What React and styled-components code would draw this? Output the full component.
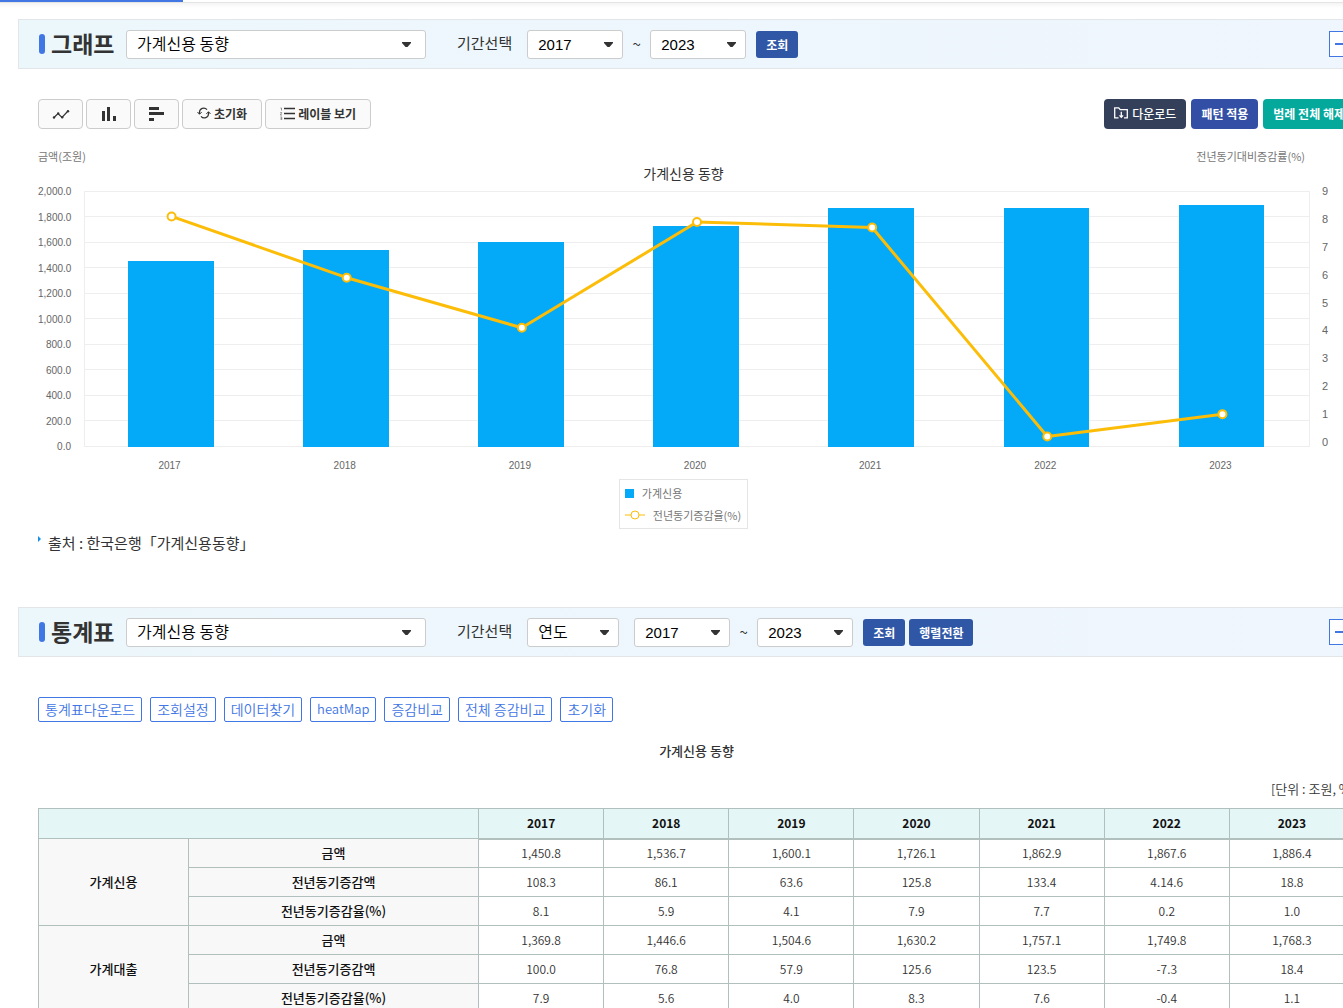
import React from "react";
import styled, { createGlobalStyle } from "styled-components";

const GlobalStyle = createGlobalStyle`
  *, *::before, *::after { box-sizing: border-box; }
  body {
    margin: 0;
    background: #fff;
    color: #333;
    font-family: "Noto Sans CJK KR", "Noto Sans", sans-serif;
  }
  button, select { font-family: inherit; margin: 0; cursor: pointer; }
`;

const Page = styled.main`
  height: 100vh;
  overflow: hidden;
`;

const TabLine = styled.div`
  height: 9px;
  background: linear-gradient(#e5e5e5 0 1px, #f4f4f4 1px, #fff 6px) 0 2px no-repeat;
`;

const ActiveTab = styled.div`
  width: 183px;
  height: 2px;
  background: #4176e5;
`;

const Content = styled.div`
  margin: 10px -32px 0 18px;
`;

const Panel = styled.header`
  display: flex;
  align-items: center;
  height: 50px;
  padding: 0 19px 0 20px;
  border: 1px solid #e3e6e8;
  background: linear-gradient(90deg, #ecf7fc, #eff6fd);
`;

const TitleBlock = styled.div`
  display: flex;
  align-items: center;
  gap: 6px;
  width: 87px;
  flex: none;

  &::before {
    content: "";
    width: 6px;
    height: 20px;
    border-radius: 3px;
    background: #4176e5;
  }
`;

const Title = styled.h2`
  margin: 0;
  padding-bottom: 2px;
  font-size: 23px;
  line-height: 30px;
  font-weight: 700;
  white-space: nowrap;
`;

const SelectBox = styled.span`
  position: relative;
  flex: none;
  width: ${(p) => p.$width}px;
  margin-right: ${(p) => p.$after || 0}px;

  select {
    appearance: none;
    display: block;
    width: 100%;
    height: 29px;
    padding: ${(p) => (p.$numeric ? "1px 10px 0" : "0 10px 2px")};
    border: 1px solid #ccc;
    border-radius: 3px;
    background: #fff;
    color: #000;
    font-size: ${(p) => (p.$numeric ? 15 : 16)}px;
    font-family: ${(p) => (p.$numeric ? '"Liberation Sans", Arial, sans-serif' : "inherit")};
    font-weight: 350;
    line-height: 20px;
  }

  svg {
    position: absolute;
    top: 12px;
    right: ${(p) => (p.$width > 200 ? 15 : 10)}px;
    pointer-events: none;
  }
`;

const PeriodLabel = styled.label`
  margin: 0 15px 0 31px;
  padding-bottom: 2px;
  font-size: 15px;
  line-height: 20px;
  white-space: nowrap;
`;

const Tilde = styled.span`
  width: 27px;
  text-align: center;
  font-size: 15px;
  line-height: 20px;
`;

const Actions = styled.div`
  display: flex;
  gap: 4px;
  margin-left: 10px;
`;

const ActionButton = styled.button`
  height: 27px;
  padding: 0 10px;
  border: 0;
  border-radius: 3px;
  background: #2f57a6;
  color: #fff;
  font-size: 12px;
  font-weight: 700;
  white-space: nowrap;
`;

const CollapseButton = styled.button`
  display: flex;
  align-items: center;
  justify-content: center;
  width: 26px;
  height: 26px;
  margin-left: auto;
  padding: 0;
  border: 1px solid #4176e5;
  background: #fff;

  &::before {
    content: "";
    width: 14px;
    height: 2px;
    background: #4176e5;
  }
`;

const Body = styled.section`
  padding: ${(p) => p.$top}px 20px 0;
`;

const Toolbar = styled.div`
  display: flex;
  justify-content: space-between;
`;

const ButtonGroup = styled.div`
  display: flex;
  gap: ${(p) => p.$gap}px;
`;

const ToolButton = styled.button`
  display: flex;
  align-items: center;
  justify-content: center;
  gap: 3px;
  height: 30px;
  min-width: 45px;
  padding: ${(p) => (p.$labelled ? "0 14px 2px" : "0 12px")};
  border: 1px solid #ccc;
  border-radius: 4px;
  background: #fafafa;
  color: #333;
  font-size: 12px;
  font-weight: 700;
  white-space: nowrap;
`;

const SolidButton = styled.button`
  display: flex;
  align-items: center;
  gap: 4px;
  height: 30px;
  padding: 0 10px 2px;
  border: 0;
  border-radius: 4px;
  background: ${(p) => p.$color};
  color: #fff;
  font-size: 12px;
  font-weight: ${(p) => (p.$regular ? 500 : 700)};
  white-space: nowrap;
`;

const Figure = styled.figure`
  margin: 19px 0 0;
`;

const AxisTitles = styled.div`
  display: flex;
  justify-content: space-between;
  padding-right: 50px;
  color: #777;
  font-size: 11px;
  line-height: 16px;
`;

const ChartTitle = styled.figcaption`
  padding-right: 26px;
  text-align: center;
  font-size: 14px;
  line-height: 18px;
`;

const PlotGrid = styled.div`
  display: grid;
  grid-template-columns: 46px 1fr 45px;
  margin-top: 9px;
  color: #666;
  font: 10px/12px "Liberation Sans", Arial, sans-serif;
`;

const AxisScale = styled.div`
  display: flex;
  flex-direction: column;
  justify-content: space-between;
  height: ${(p) => p.$height}px;
  margin-top: ${(p) => (p.$right ? -6 : -5)}px;
  padding: ${(p) => (p.$right ? "0 0 0 12px" : "0 13px 0 0")};
  text-align: ${(p) => (p.$right ? "left" : "right")};
  font-size: ${(p) => (p.$right ? 11 : 10)}px;
`;

const Plot = styled.svg`
  display: block;
  width: 100%;
  height: 256px;
  overflow: visible;
`;

const YearScale = styled.div`
  grid-column: 2;
  display: grid;
  grid-template-columns: repeat(7, 1fr);
  margin: 7px 2px 0 -2px;
  text-align: center;
`;

const LegendRow = styled.div`
  display: flex;
  justify-content: center;
  padding-right: 26px;
  margin-top: 7px;
`;

const Legend = styled.ul`
  display: grid;
  gap: 6px;
  margin: 0;
  padding: 5px 6px 5px 5px;
  border: 1px solid #e5e5e5;
  list-style: none;
  color: #777;
  font-size: 11px;
  line-height: 16px;

  li {
    display: flex;
    align-items: center;
    gap: 8px;
  }
`;

const Source = styled.p`
  display: flex;
  gap: 7px;
  margin: 4px 0 54px;
  font-size: 15px;
  line-height: 20px;

  svg { margin-top: 3px; }
`;

const TagRow = styled.div`
  display: flex;
  gap: 8px;
`;

const TagButton = styled.button`
  height: 25px;
  padding: 0 6px 2px;
  border: 1px solid #4176e5;
  border-radius: 2px;
  background: #fff;
  color: #4176e5;
  font-size: ${(p) => (p.$latin ? 13 : 14)}px;
  font-weight: 350;
  line-height: 20px;
  white-space: nowrap;
`;

const TableTitle = styled.h3`
  margin: 19px 0 18px;
  text-align: center;
  font-size: 13px;
  font-weight: 500;
  line-height: 20px;
`;

const Unit = styled.p`
  margin: 0 0 9px;
  text-align: right;
  font-size: 13px;
  font-weight: 350;
  line-height: 20px;
`;

const DataTable = styled.table`
  width: 100%;
  table-layout: fixed;
  border-collapse: collapse;
  text-align: center;
  font-size: 12px;
  line-height: 18px;

  th, td {
    height: 29px;
    padding: 0;
    border: 1px solid #b1c0bc;
  }
  td { font-weight: 350; color: #333; }
  th { font-weight: 500; color: #111; }
  tbody th {
    background: #f8f8f8;
    font-size: 13px;
  }
  thead th, thead td {
    height: 30px;
    background: #e5f6f6;
  }
  thead th {
    font-weight: 700;
    border-bottom-width: 2px;
  }
`;

const GroupCol = styled.col`
  width: 150px;
`;

const ItemCol = styled.col`
  width: 290px;
`;

const YEARS = [2017, 2018, 2019, 2020, 2021, 2022, 2023];
const AMOUNT = [1450.8, 1536.7, 1600.1, 1726.1, 1862.9, 1867.6, 1886.4];
const RATE = [8.1, 5.9, 4.1, 7.9, 7.7, 0.2, 1.0];
const LEFT_TICKS = ["2,000.0", "1,800.0", "1,600.0", "1,400.0", "1,200.0", "1,000.0", "800.0", "600.0", "400.0", "200.0", "0.0"];
const RIGHT_TICKS = [9, 8, 7, 6, 5, 4, 3, 2, 1, 0];

const GROUPS = [
  {
    name: "가계신용",
    rows: [
      ["금액", "1,450.8", "1,536.7", "1,600.1", "1,726.1", "1,862.9", "1,867.6", "1,886.4"],
      ["전년동기증감액", "108.3", "86.1", "63.6", "125.8", "133.4", "4.14.6", "18.8"],
      ["전년동기증감율(%)", "8.1", "5.9", "4.1", "7.9", "7.7", "0.2", "1.0"],
    ],
  },
  {
    name: "가계대출",
    rows: [
      ["금액", "1,369.8", "1,446.6", "1,504.6", "1,630.2", "1,757.1", "1,749.8", "1,768.3"],
      ["전년동기증감액", "100.0", "76.8", "57.9", "125.6", "123.5", "-7.3", "18.4"],
      ["전년동기증감율(%)", "7.9", "5.6", "4.0", "8.3", "7.6", "-0.4", "1.1"],
    ],
  },
];

const TAGS = ["통계표다운로드", "조회설정", "데이터찾기", "heatMap", "증감비교", "전체 증감비교", "초기화"];

const centerOf = (i) => `${((i + 0.5) * 100) / 7}%`;
const rateY = (v) => 251 - v * 27.85;

function Dropdown({ id, label, options, width, numeric, after }) {
  return (
    <SelectBox $width={width} $numeric={numeric} $after={after}>
      <select id={id} aria-label={label}>
        {options.map((o) => (
          <option key={o}>{o}</option>
        ))}
      </select>
      <svg width="9" height="5" viewBox="0 0 9 5" aria-hidden="true">
        <path d="M0 0h9v1L5.5 5h-2L0 1z" fill="#333" />
      </svg>
    </SelectBox>
  );
}

const LineIcon = () => (
  <svg width="18" height="12" viewBox="0 0 18 12" aria-hidden="true">
    <path d="M2 9.500 6 5.500l4 4 6-6.500" fill="none" stroke="#333" strokeWidth="1.200" />
    <g fill="#333">
      <circle cx="2" cy="9.500" r="1.200" />
      <circle cx="6.200" cy="5.500" r="1.200" />
      <circle cx="10.200" cy="9.300" r="1.200" />
      <circle cx="16" cy="3.300" r="1.200" />
    </g>
  </svg>
);

const ColumnIcon = () => (
  <svg width="14" height="14" viewBox="0 0 14 14" fill="#333" aria-hidden="true">
    <path d="M0 4h3v10H0zM5 0h3v14H5zM11 9h3v5h-3z" />
  </svg>
);

const BarIcon = () => (
  <svg width="15" height="14" viewBox="0 0 15 14" fill="#333" aria-hidden="true">
    <path d="M0 0h10v3H0zM0 5h15v3H0zM0 11h5v3H0z" />
  </svg>
);

const RefreshIcon = () => (
  <svg width="14" height="12" viewBox="0 0 14 12" fill="none" stroke="#333" aria-hidden="true">
    <path d="M2.500 7V5.500a4.200 4.200 0 0 1 7.500-2.800M11.500 5v1.500A4.200 4.200 0 0 1 4 9.300" strokeWidth="1.200" />
    <path d="M.5 5 2.500 7.300 4.700 5M9.300 7l2.200-2.300L13.500 7" />
  </svg>
);

const ListIcon = () => (
  <svg width="15" height="13" viewBox="0 0 15 13" aria-hidden="true">
    <path d="M4 1.500h11M4 6.500h11M4 11.500h11" stroke="#333" strokeWidth="1.300" />
    <path d="M.5 1h1v2.500M.3 5.500h1.400L.4 8h1.600M.3 10h1.400v3H.3M.6 11.500h1" stroke="#777" strokeWidth=".8" fill="none" />
  </svg>
);

const FolderIcon = () => (
  <svg width="14" height="12" viewBox="0 0 14 12" fill="none" stroke="#fff" strokeWidth="1.300" aria-hidden="true">
    <path d="M4.500 10.800H.7V.8h4l1.500 1.900h7.100v8.100H10" />
    <path d="M7.300 4.800v5.500M5.500 8.400l1.800 2 1.800-2" />
  </svg>
);

function Chart() {
  return (
    <Figure>
      <AxisTitles>
        <span>금액(조원)</span>
        <span>전년동기대비증감률(%)</span>
      </AxisTitles>
      <ChartTitle>가계신용 동향</ChartTitle>
      <PlotGrid>
        <AxisScale $height={267}>
          {LEFT_TICKS.map((t) => (
            <span key={t}>{t}</span>
          ))}
        </AxisScale>
        <Plot aria-label="가계신용 동향" role="img">
          <g fill="#eee" shapeRendering="crispEdges">
            {LEFT_TICKS.map((t, i) => (
              <rect key={t} x="0" y={Math.floor(i * 25.5)} width="100%" height="1" />
            ))}
            <rect x="0" y="0" width="1" height="256" />
            <svg x="100%" overflow="visible">
              <rect x="-1" y="0" width="1" height="256" />
            </svg>
          </g>
          {AMOUNT.map((v, i) => {
            const h = Math.round(v * 0.1282);
            return (
              <rect
                key={i}
                x={`${((i + 0.25) * 100) / 7}%`}
                y={256 - h}
                width="7%"
                height={h}
                fill="#04a9f7"
                shapeRendering="crispEdges"
              />
            );
          })}
          {RATE.slice(1).map((v, i) => (
            <line
              key={i}
              x1={centerOf(i)}
              y1={rateY(RATE[i])}
              x2={centerOf(i + 1)}
              y2={rateY(v)}
              stroke="#fcbd09"
              strokeWidth="3"
              strokeLinecap="round"
            />
          ))}
          {RATE.map((v, i) => (
            <circle key={i} cx={centerOf(i)} cy={rateY(v)} r="4" fill="#fff" stroke="#fcbd09" strokeWidth="2" />
          ))}
        </Plot>
        <AxisScale $height={263} $right>
          {RIGHT_TICKS.map((t) => (
            <span key={t}>{t}</span>
          ))}
        </AxisScale>
        <YearScale>
          {YEARS.map((y) => (
            <span key={y}>{y}</span>
          ))}
        </YearScale>
      </PlotGrid>
      <LegendRow>
        <Legend>
          <li>
            <svg width="9" height="9" aria-hidden="true">
              <rect width="9" height="9" fill="#04a9f7" />
            </svg>
            가계신용
          </li>
          <li>
            <svg width="20" height="10" aria-hidden="true">
              <path d="M0 5h20" stroke="#fcbd09" />
              <circle cx="10" cy="5" r="4" fill="#fff" stroke="#fcbd09" />
            </svg>
            전년동기증감율(%)
          </li>
        </Legend>
      </LegendRow>
    </Figure>
  );
}

export default function App() {
  return (
    <Page>
      <GlobalStyle />
      <TabLine>
        <ActiveTab />
      </TabLine>
      <Content>
        <Panel>
          <TitleBlock>
            <Title>그래프</Title>
          </TitleBlock>
          <Dropdown label="그래프 항목" options={["가계신용 동향"]} width={300} />
          <PeriodLabel htmlFor="graph-from">기간선택</PeriodLabel>
          <Dropdown id="graph-from" options={YEARS} width={96} numeric />
          <Tilde>~</Tilde>
          <Dropdown label="종료 연도" options={[...YEARS].reverse()} width={96} numeric />
          <Actions>
            <ActionButton>조회</ActionButton>
          </Actions>
          <CollapseButton aria-label="접기" />
        </Panel>
        <Body $top={30}>
          <Toolbar>
            <ButtonGroup $gap={3}>
              <ToolButton aria-label="꺾은선형"><LineIcon /></ToolButton>
              <ToolButton aria-label="세로막대형"><ColumnIcon /></ToolButton>
              <ToolButton aria-label="가로막대형"><BarIcon /></ToolButton>
              <ToolButton $labelled><RefreshIcon />초기화</ToolButton>
              <ToolButton $labelled><ListIcon />레이블 보기</ToolButton>
            </ButtonGroup>
            <ButtonGroup $gap={5}>
              <SolidButton $color="#343f5a" $regular><FolderIcon />다운로드</SolidButton>
              <SolidButton $color="#334fa5">패턴 적용</SolidButton>
              <SolidButton $color="#05a99c">범례 전체 해제</SolidButton>
            </ButtonGroup>
          </Toolbar>
          <Chart />
          <Source>
            <svg width="3" height="6" aria-hidden="true">
              <path d="M0 0l3 3-3 3z" fill="#1590ea" />
            </svg>
            출처 : 한국은행「가계신용동향」
          </Source>
        </Body>
        <Panel>
          <TitleBlock>
            <Title>통계표</Title>
          </TitleBlock>
          <Dropdown label="통계표 항목" options={["가계신용 동향"]} width={300} />
          <PeriodLabel htmlFor="table-cycle">기간선택</PeriodLabel>
          <Dropdown id="table-cycle" options={["연도"]} width={92} after={15} />
          <Dropdown label="시작 연도" options={YEARS} width={96} numeric />
          <Tilde>~</Tilde>
          <Dropdown label="종료 연도" options={[...YEARS].reverse()} width={96} numeric />
          <Actions>
            <ActionButton>조회</ActionButton>
            <ActionButton>행렬전환</ActionButton>
          </Actions>
          <CollapseButton aria-label="접기" />
        </Panel>
        <Body $top={40}>
          <TagRow>
            {TAGS.map((t) => (
              <TagButton key={t} $latin={t === "heatMap"}>{t}</TagButton>
            ))}
          </TagRow>
          <TableTitle>가계신용 동향</TableTitle>
          <Unit>[단위 : 조원, %]</Unit>
          <DataTable>
            <colgroup>
              <GroupCol />
              <ItemCol />
              {YEARS.map((y) => (
                <col key={y} />
              ))}
            </colgroup>
            <thead>
              <tr>
                <td colSpan={2} />
                {YEARS.map((y) => (
                  <th key={y} scope="col">{y}</th>
                ))}
              </tr>
            </thead>
            <tbody>
              {GROUPS.map((g) =>
                g.rows.map(([label, ...values], r) => (
                  <tr key={g.name + label}>
                    {r === 0 && <th rowSpan={3} scope="rowgroup">{g.name}</th>}
                    <th scope="row">{label}</th>
                    {values.map((v, i) => (
                      <td key={i}>{v}</td>
                    ))}
                  </tr>
                ))
              )}
            </tbody>
          </DataTable>
        </Body>
      </Content>
    </Page>
  );
}
